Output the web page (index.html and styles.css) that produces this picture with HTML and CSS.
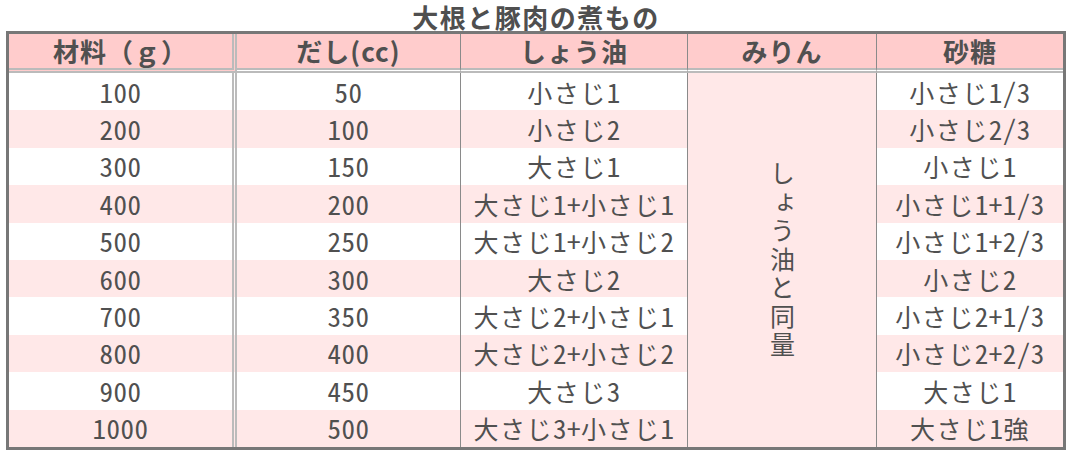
FILE: index.html
```html
<!DOCTYPE html>
<html lang="ja">
<head>
<meta charset="utf-8">
<title>大根と豚肉の煮もの</title>
<link rel="stylesheet" href="styles.css">
</head>
<body>
<div class="page">
  <div class="title">大根と豚肉の煮もの</div>
  <table class="recipe">
    <colgroup>
      <col class="c1"><col class="c2"><col class="c3"><col class="c4"><col class="c5">
    </colgroup>
    <thead>
      <tr>
        <th class="k1">材料（ｇ）</th>
        <th class="k2">だし(cc)</th>
        <th class="k3">しょう油</th>
        <th class="k4">みりん</th>
        <th class="k5">砂糖</th>
      </tr>
    </thead>
    <tbody>
      <tr class="odd"><td class="k1"><span class="n">100</span></td><td class="k2"><span class="n">50</span></td><td class="k3">小さじ<span class="n">1</span></td><td class="k4 mirin" rowspan="10"><div class="vert">しょう油と同量</div></td><td class="k5">小さじ<span class="n">1/3</span></td></tr>
      <tr class="even"><td class="k1"><span class="n">200</span></td><td class="k2"><span class="n">100</span></td><td class="k3">小さじ<span class="n">2</span></td><td class="k5">小さじ<span class="n">2/3</span></td></tr>
      <tr class="odd"><td class="k1"><span class="n">300</span></td><td class="k2"><span class="n">150</span></td><td class="k3">大さじ<span class="n">1</span></td><td class="k5">小さじ<span class="n">1</span></td></tr>
      <tr class="even"><td class="k1"><span class="n">400</span></td><td class="k2"><span class="n">200</span></td><td class="k3">大さじ<span class="n">1+</span>小さじ<span class="n">1</span></td><td class="k5">小さじ<span class="n">1+1/3</span></td></tr>
      <tr class="odd"><td class="k1"><span class="n">500</span></td><td class="k2"><span class="n">250</span></td><td class="k3">大さじ<span class="n">1+</span>小さじ<span class="n">2</span></td><td class="k5">小さじ<span class="n">1+2/3</span></td></tr>
      <tr class="even"><td class="k1"><span class="n">600</span></td><td class="k2"><span class="n">300</span></td><td class="k3">大さじ<span class="n">2</span></td><td class="k5">小さじ<span class="n">2</span></td></tr>
      <tr class="odd"><td class="k1"><span class="n">700</span></td><td class="k2"><span class="n">350</span></td><td class="k3">大さじ<span class="n">2+</span>小さじ<span class="n">1</span></td><td class="k5">小さじ<span class="n">2+1/3</span></td></tr>
      <tr class="even"><td class="k1"><span class="n">800</span></td><td class="k2"><span class="n">400</span></td><td class="k3">大さじ<span class="n">2+</span>小さじ<span class="n">2</span></td><td class="k5">小さじ<span class="n">2+2/3</span></td></tr>
      <tr class="odd"><td class="k1"><span class="n">900</span></td><td class="k2"><span class="n">450</span></td><td class="k3">大さじ<span class="n">3</span></td><td class="k5">大さじ<span class="n">1</span></td></tr>
      <tr class="even"><td class="k1"><span class="n">1000</span></td><td class="k2"><span class="n">500</span></td><td class="k3">大さじ<span class="n">3+</span>小さじ<span class="n">1</span></td><td class="k5">大さじ<span class="n">1</span>強</td></tr>
    </tbody>
  </table>
</div>
</body>
</html>
```
FILE: styles.css
```css
html, body {
  margin: 0;
  padding: 0;
  background: #ffffff;
}

body {
  font-family: "Noto Sans CJK JP", "Noto Sans", sans-serif;
  color: #505050;
}

.page {
  padding-top: 3px;
  padding-left: 6px;
  width: 1060px;
}

.title {
  height: 28px;
  line-height: 28px;
  text-align: center;
  font-size: 26px;
  font-weight: bold;
  letter-spacing: 1.5px;
  color: #4f4f4f;
}

.recipe {
  width: 1060px;
  table-layout: fixed;
  border-collapse: separate;
  border-spacing: 0;
  border: 3px solid #777777;
  background: #ffffff;
}

.c1 { width: 228px; }
.c2 { width: 224px; }
.c3 { width: 227px; }
.c4 { width: 189px; }
.c5 { width: 186px; }

.recipe th,
.recipe td {
  box-sizing: border-box;
  padding: 0;
  text-align: center;
  vertical-align: middle;
  white-space: nowrap;
}

.recipe th {
  height: 39px;
  line-height: 30px;
  background: #ffcccc;
  background-clip: padding-box;
  border-bottom: 5px double #bbbbbb;
  font-size: 26px;
  font-weight: bold;
  letter-spacing: 1px;
}

.recipe td {
  font-size: 25px;
  line-height: 30px;
  letter-spacing: 1.5px;
}

.recipe .n {
  font-size: 27px;
  font-feature-settings: "hwid" 1;
  letter-spacing: 0.5px;
}

.recipe tbody tr {
  height: 37.4px;
}

.recipe tr.odd td { background: #ffffff; }
.recipe tr.even td { background: #ffe8e8; }

.recipe .k1 { border-right: 5px double #bbbbbb; }
.recipe th.k1 { background-clip: border-box; }
.recipe .k2 { border-right: 1px solid #8a8a8a; }
.recipe .k3 { border-right: 1px solid #8a8a8a; }
.recipe .k4 { border-right: 1px solid #8a8a8a; }

.recipe tr.odd td.mirin {
  background: #ffe8e8;
}

.vert {
  writing-mode: vertical-rl;
  display: inline-block;
  padding-top: 6px;
  font-size: 25px;
  letter-spacing: 3.5px;
  line-height: 1;
}
```
